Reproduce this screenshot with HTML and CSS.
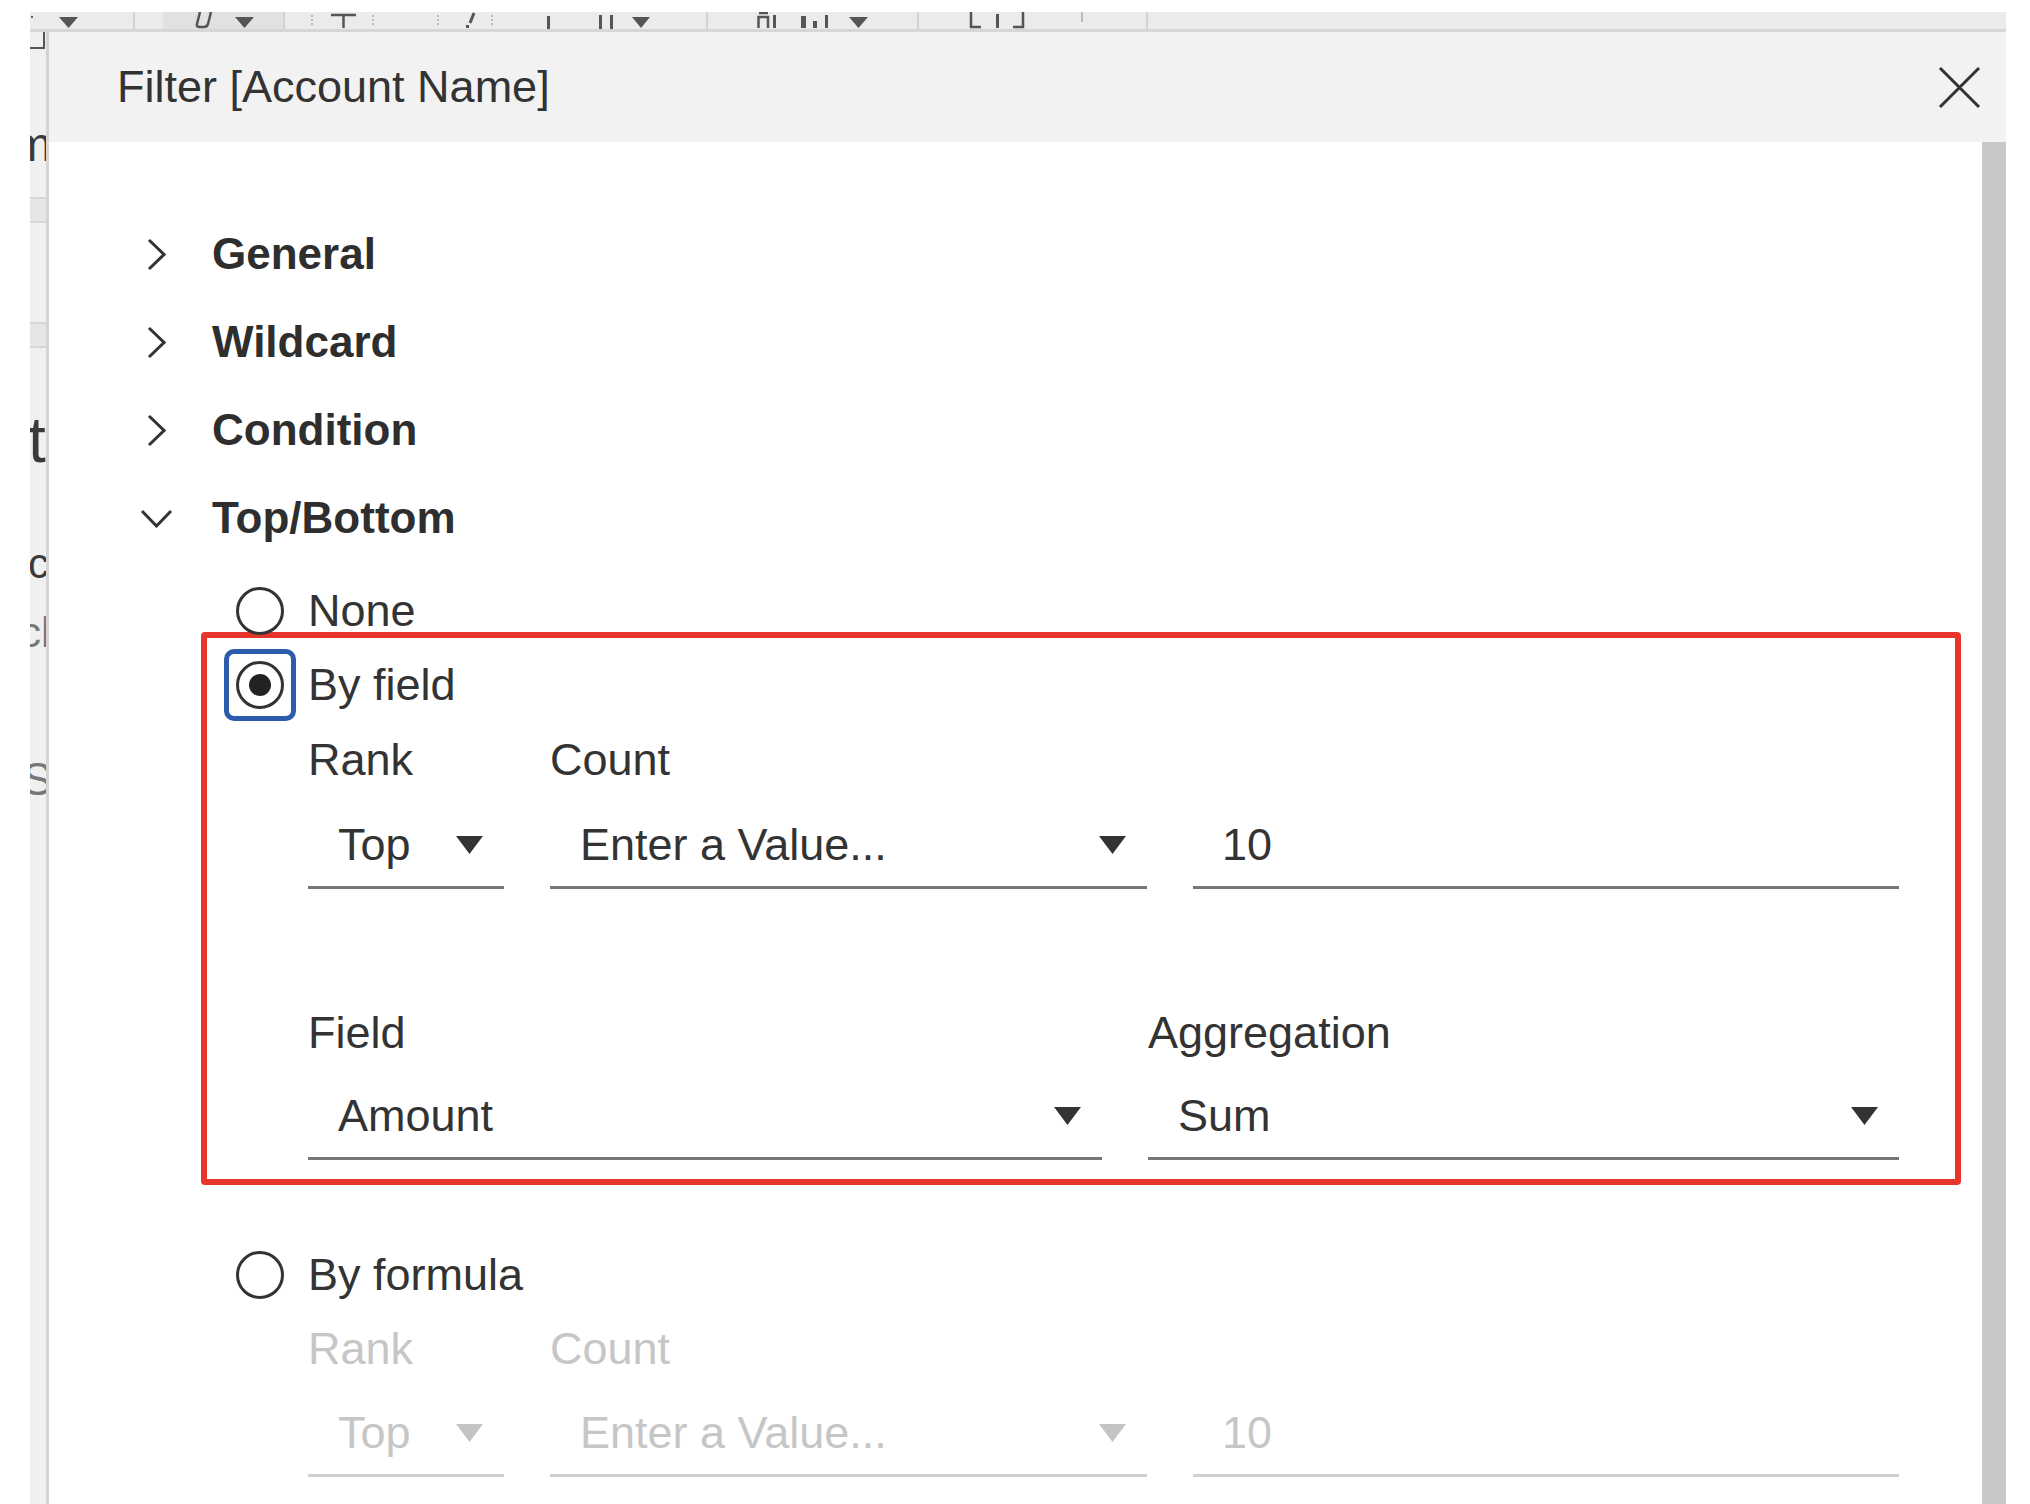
FILE: index.html
```html
<!DOCTYPE html>
<html lang="en">
<head>
<meta charset="utf-8">
<title>Filter [Account Name]</title>
<link rel="stylesheet" href="styles.css">
</head>
<body>
<div class="page">
  <div class="toolbar">
    <svg width="1976" height="17" viewBox="0 0 1976 17">
      <rect x="1" y="4" width="2" height="2" fill="#666"/>
      <polygon points="29,5 48,5 38.5,16" fill="#555"/>
      <rect x="103" y="0" width="2" height="17" fill="#d2d2d2"/>
      <rect x="133" y="0" width="120" height="17" fill="#e1e1e1"/>
      <path d="M170 0 L167 12 Q166 15 170 15 L174 15 Q177 15 178 12 L181 0" fill="none" stroke="#555" stroke-width="2.5"/>
      <polygon points="205,5 224,5 214.5,16" fill="#555"/>
      <rect x="253" y="0" width="2" height="17" fill="#d2d2d2"/>
      <path d="M282 3 V13 M343 3 V13 M408 3 V13 M462 3 V13" stroke="#bbb" stroke-width="2" stroke-dasharray="2 2"/>
      <path d="M301 3 H326 M313.5 3 V16" stroke="#555" stroke-width="2.5" fill="none"/>
      <path d="M444 1 L440 11" stroke="#555" stroke-width="3"/>
      <rect x="436" y="13" width="3" height="3" fill="#555"/>
      <rect x="517" y="4" width="3" height="13" fill="#555"/>
      <rect x="569" y="3" width="3" height="14" fill="#555"/>
      <rect x="580" y="3" width="3" height="14" fill="#555"/>
      <polygon points="602,5 620,5 611,16" fill="#555"/>
      <rect x="676" y="0" width="2" height="17" fill="#d2d2d2"/>
      <path d="M729 1 H738 M728.5 16 V5 H738 V16" stroke="#555" stroke-width="2.5" fill="none"/>
      <rect x="743" y="3" width="3" height="13" fill="#555"/>
      <rect x="771" y="4" width="5" height="12" fill="#555"/>
      <rect x="783" y="9" width="4" height="7" fill="#555"/>
      <rect x="795" y="3" width="3" height="13" fill="#555"/>
      <polygon points="819,5 838,5 828.5,16" fill="#555"/>
      <rect x="887" y="0" width="2" height="17" fill="#d2d2d2"/>
      <path d="M941 0 V15 H951 M993 0 V15 H983" stroke="#555" stroke-width="2.5" fill="none"/>
      <rect x="966" y="2" width="3" height="14" fill="#555"/>
      <rect x="1051" y="0" width="2" height="10" fill="#bbb"/>
      <rect x="1116" y="0" width="2" height="17" fill="#d2d2d2"/>
    </svg>
  </div>
  <div class="main">
    <div class="sidebar">
      <div class="corner"></div>
      <div class="frag frag-m">m</div>
      <div class="band band-1"></div>
      <div class="band band-2"></div>
      <div class="frag frag-t">t</div>
      <div class="frag frag-c">c</div>
      <div class="frag frag-ch">ch</div>
      <div class="frag frag-s">S</div>
    </div>
    <div class="dialog">
      <div class="dialog-header">
        <div class="dialog-title">Filter [Account Name]</div>
        <button class="close" aria-label="Close">
          <svg width="43" height="43" viewBox="0 0 43 43"><path d="M2 2 L41 41 M41 2 L2 41" stroke="#333" stroke-width="3" fill="none"/></svg>
        </button>
      </div>
      <div class="dialog-body">
        <div class="content">
          <div class="section">
            <span class="chev"><svg width="19" height="33" viewBox="0 0 19 33"><path d="M2 2 L17 16.5 L2 31" stroke="#333" stroke-width="3" fill="none"/></svg></span>
            <span class="section-title">General</span>
          </div>
          <div class="section">
            <span class="chev"><svg width="19" height="33" viewBox="0 0 19 33"><path d="M2 2 L17 16.5 L2 31" stroke="#333" stroke-width="3" fill="none"/></svg></span>
            <span class="section-title">Wildcard</span>
          </div>
          <div class="section">
            <span class="chev"><svg width="19" height="33" viewBox="0 0 19 33"><path d="M2 2 L17 16.5 L2 31" stroke="#333" stroke-width="3" fill="none"/></svg></span>
            <span class="section-title">Condition</span>
          </div>
          <div class="section">
            <span class="chev"><svg width="33" height="19" viewBox="0 0 33 19"><path d="M2 2 L16.5 17 L31 2" stroke="#333" stroke-width="3" fill="none"/></svg></span>
            <span class="section-title">Top/Bottom</span>
          </div>

          <div class="options">
            <div class="option option-plain">
              <span class="radio-slot"><span class="radio"></span></span>
              <span class="option-label">None</span>
            </div>

            <div class="highlight">
              <div class="option option-focused">
                <span class="radio-slot focus"><span class="radio checked"></span></span>
                <span class="option-label">By field</span>
              </div>
              <div class="fields">
                <div class="field-row cols-3">
                  <div class="label">Rank</div>
                  <div class="label">Count</div>
                  <div class="label"></div>
                  <div class="select"><span>Top</span><svg class="arrow" width="27" height="18" viewBox="0 0 27 18"><polygon points="0,0 27,0 13.5,18"/></svg></div>
                  <div class="select"><span>Enter a Value...</span><svg class="arrow" width="27" height="18" viewBox="0 0 27 18"><polygon points="0,0 27,0 13.5,18"/></svg></div>
                  <div class="select input"><span>10</span></div>
                </div>
                <div class="field-row cols-2">
                  <div class="label">Field</div>
                  <div class="label">Aggregation</div>
                  <div class="select"><span>Amount</span><svg class="arrow" width="27" height="18" viewBox="0 0 27 18"><polygon points="0,0 27,0 13.5,18"/></svg></div>
                  <div class="select"><span>Sum</span><svg class="arrow" width="27" height="18" viewBox="0 0 27 18"><polygon points="0,0 27,0 13.5,18"/></svg></div>
                </div>
              </div>
            </div>

            <div class="option-group">
              <div class="option">
                <span class="radio-slot"><span class="radio"></span></span>
                <span class="option-label">By formula</span>
              </div>
              <div class="fields disabled">
                <div class="field-row cols-3">
                  <div class="label">Rank</div>
                  <div class="label">Count</div>
                  <div class="label"></div>
                  <div class="select"><span>Top</span><svg class="arrow" width="27" height="18" viewBox="0 0 27 18"><polygon points="0,0 27,0 13.5,18"/></svg></div>
                  <div class="select"><span>Enter a Value...</span><svg class="arrow" width="27" height="18" viewBox="0 0 27 18"><polygon points="0,0 27,0 13.5,18"/></svg></div>
                  <div class="select input"><span>10</span></div>
                </div>
              </div>
            </div>
          </div>
        </div>
        <div class="scrollbar"></div>
      </div>
    </div>
  </div>
</div>
</body>
</html>
```
FILE: styles.css
```css
html, body {
  margin: 0;
  padding: 0;
}
body {
  width: 2030px;
  height: 1504px;
  overflow: hidden;
  background: #ffffff;
  font-family: "Liberation Sans", Arial, sans-serif;
  color: #333333;
}
.page {
  box-sizing: border-box;
  height: 1504px;
  padding: 12px 24px 0 30px;
  display: flex;
  flex-direction: column;
}
.toolbar {
  flex: none;
  height: 17px;
  background: #ebebeb;
  border-bottom: 3px solid #d6d6d6;
  overflow: hidden;
}
.toolbar svg {
  display: block;
}
.main {
  flex: 1;
  display: flex;
  min-height: 0;
}

/* background page strip */
.sidebar {
  flex: none;
  width: 16px;
  background: #f0f0f0;
  overflow: hidden;
  display: flex;
  flex-direction: column;
}
.corner {
  flex: none;
  width: 13px;
  height: 15px;
  border-right: 2px solid #555555;
  border-bottom: 2px solid #555555;
}
.frag {
  flex: none;
  white-space: nowrap;
  color: #3a3a3a;
}
.frag-m {
  font-size: 48px;
  line-height: 56px;
  height: 56px;
  margin-top: 68px;
  text-indent: -18px;
}
.band {
  flex: none;
  height: 22px;
  background: #e6e6e6;
  border-top: 2px solid #d6d6d6;
  border-bottom: 2px solid #d6d6d6;
}
.band-1 {
  margin-top: 24px;
}
.band-2 {
  margin-top: 99px;
}
.frag-t {
  font-size: 64px;
  line-height: 72px;
  height: 72px;
  margin-top: 56px;
  text-indent: -2px;
}
.frag-c {
  font-size: 42px;
  line-height: 48px;
  height: 48px;
  margin-top: 64px;
  text-indent: -2px;
}
.frag-ch {
  font-size: 42px;
  line-height: 48px;
  height: 48px;
  margin-top: 21px;
  text-indent: -10px;
  color: #777777;
}
.frag-s {
  font-size: 46px;
  line-height: 52px;
  height: 52px;
  margin-top: 96px;
  text-indent: -8px;
  color: #777777;
}

/* dialog */
.dialog {
  flex: 1;
  min-width: 0;
  display: flex;
  flex-direction: column;
  border-left: 3px solid #d4d4d4;
}
.dialog-header {
  flex: none;
  height: 110px;
  background: #f2f2f2;
  display: flex;
  align-items: center;
  justify-content: space-between;
  padding: 0 25px 0 68px;
}
.dialog-title {
  font-size: 45px;
  line-height: 54px;
  color: #333333;
}
.close {
  width: 43px;
  height: 43px;
  padding: 0;
  border: 0;
  background: none;
}
.close svg {
  display: block;
}
.dialog-body {
  flex: 1;
  min-height: 0;
  display: flex;
  background: #ffffff;
}
.content {
  flex: 1;
  min-width: 0;
  padding-top: 68px;
}
.scrollbar {
  flex: none;
  width: 24px;
  background: #c8c8c8;
}

/* sections */
.section {
  height: 88px;
  display: flex;
  align-items: center;
  padding-left: 91px;
}
.chev {
  width: 33px;
  height: 33px;
  display: flex;
  align-items: center;
  justify-content: center;
  margin-right: 39px;
}
.chev svg {
  display: block;
}
.section-title {
  font-size: 44px;
  font-weight: 700;
  color: #2e2e2e;
}

/* options */
.options {
  padding-left: 152px;
  padding-top: 25px;
}
.option {
  display: flex;
  align-items: center;
  height: 48px;
}
.option-plain {
  margin-left: 23px;
}
.option-focused {
  height: 72px;
}
.radio-slot {
  box-sizing: border-box;
  width: 72px;
  height: 48px;
  display: flex;
  align-items: center;
  justify-content: center;
  flex: none;
}
.radio-slot.focus {
  height: 72px;
  border: 5px solid #2b5cab;
  border-radius: 10px;
}
.radio {
  box-sizing: border-box;
  width: 48px;
  height: 48px;
  border: 3px solid #333333;
  border-radius: 50%;
  display: flex;
  align-items: center;
  justify-content: center;
}
.radio.checked::after {
  content: "";
  width: 22px;
  height: 22px;
  border-radius: 50%;
  background: #222222;
}
.option-label {
  margin-left: 12px;
  font-size: 45px;
  line-height: 54px;
  color: #333333;
}

.highlight {
  box-sizing: border-box;
  width: 1760px;
  margin-top: -3px;
  border: 6px solid #e8352b;
  border-radius: 4px;
  padding: 11px 0 19px 17px;
}

.fields {
  width: 1591px;
  margin-left: 84px;
}
.field-row {
  display: grid;
  column-gap: 46px;
  grid-template-rows: 54px 71px;
  row-gap: 31px;
  margin-top: 12px;
}
.field-row.cols-3 {
  grid-template-columns: 196px 597px 1fr;
}
.field-row.cols-2 {
  grid-template-columns: 794px 1fr;
  margin-top: 117px;
  row-gap: 29px;
}
.label {
  font-size: 45px;
  line-height: 54px;
  color: #333333;
}
.select {
  display: flex;
  align-items: center;
  justify-content: space-between;
  height: 54px;
  padding: 0 21px 14px 30px;
  border-bottom: 3px solid #777777;
  font-size: 45px;
  line-height: 54px;
  color: #333333;
  white-space: nowrap;
}
.select.input {
  padding-left: 29px;
}
.arrow {
  display: block;
  fill: #333333;
  flex: none;
}

.option-group {
  margin-left: 23px;
  margin-top: 66px;
}
.option-group .field-row {
  margin-top: 23px;
  row-gap: 30px;
}
.disabled .label,
.disabled .select {
  color: #c6c6c6;
}
.disabled .select {
  border-bottom-color: #d0d0d0;
}
.disabled .arrow {
  fill: #c4c4c4;
}
```
